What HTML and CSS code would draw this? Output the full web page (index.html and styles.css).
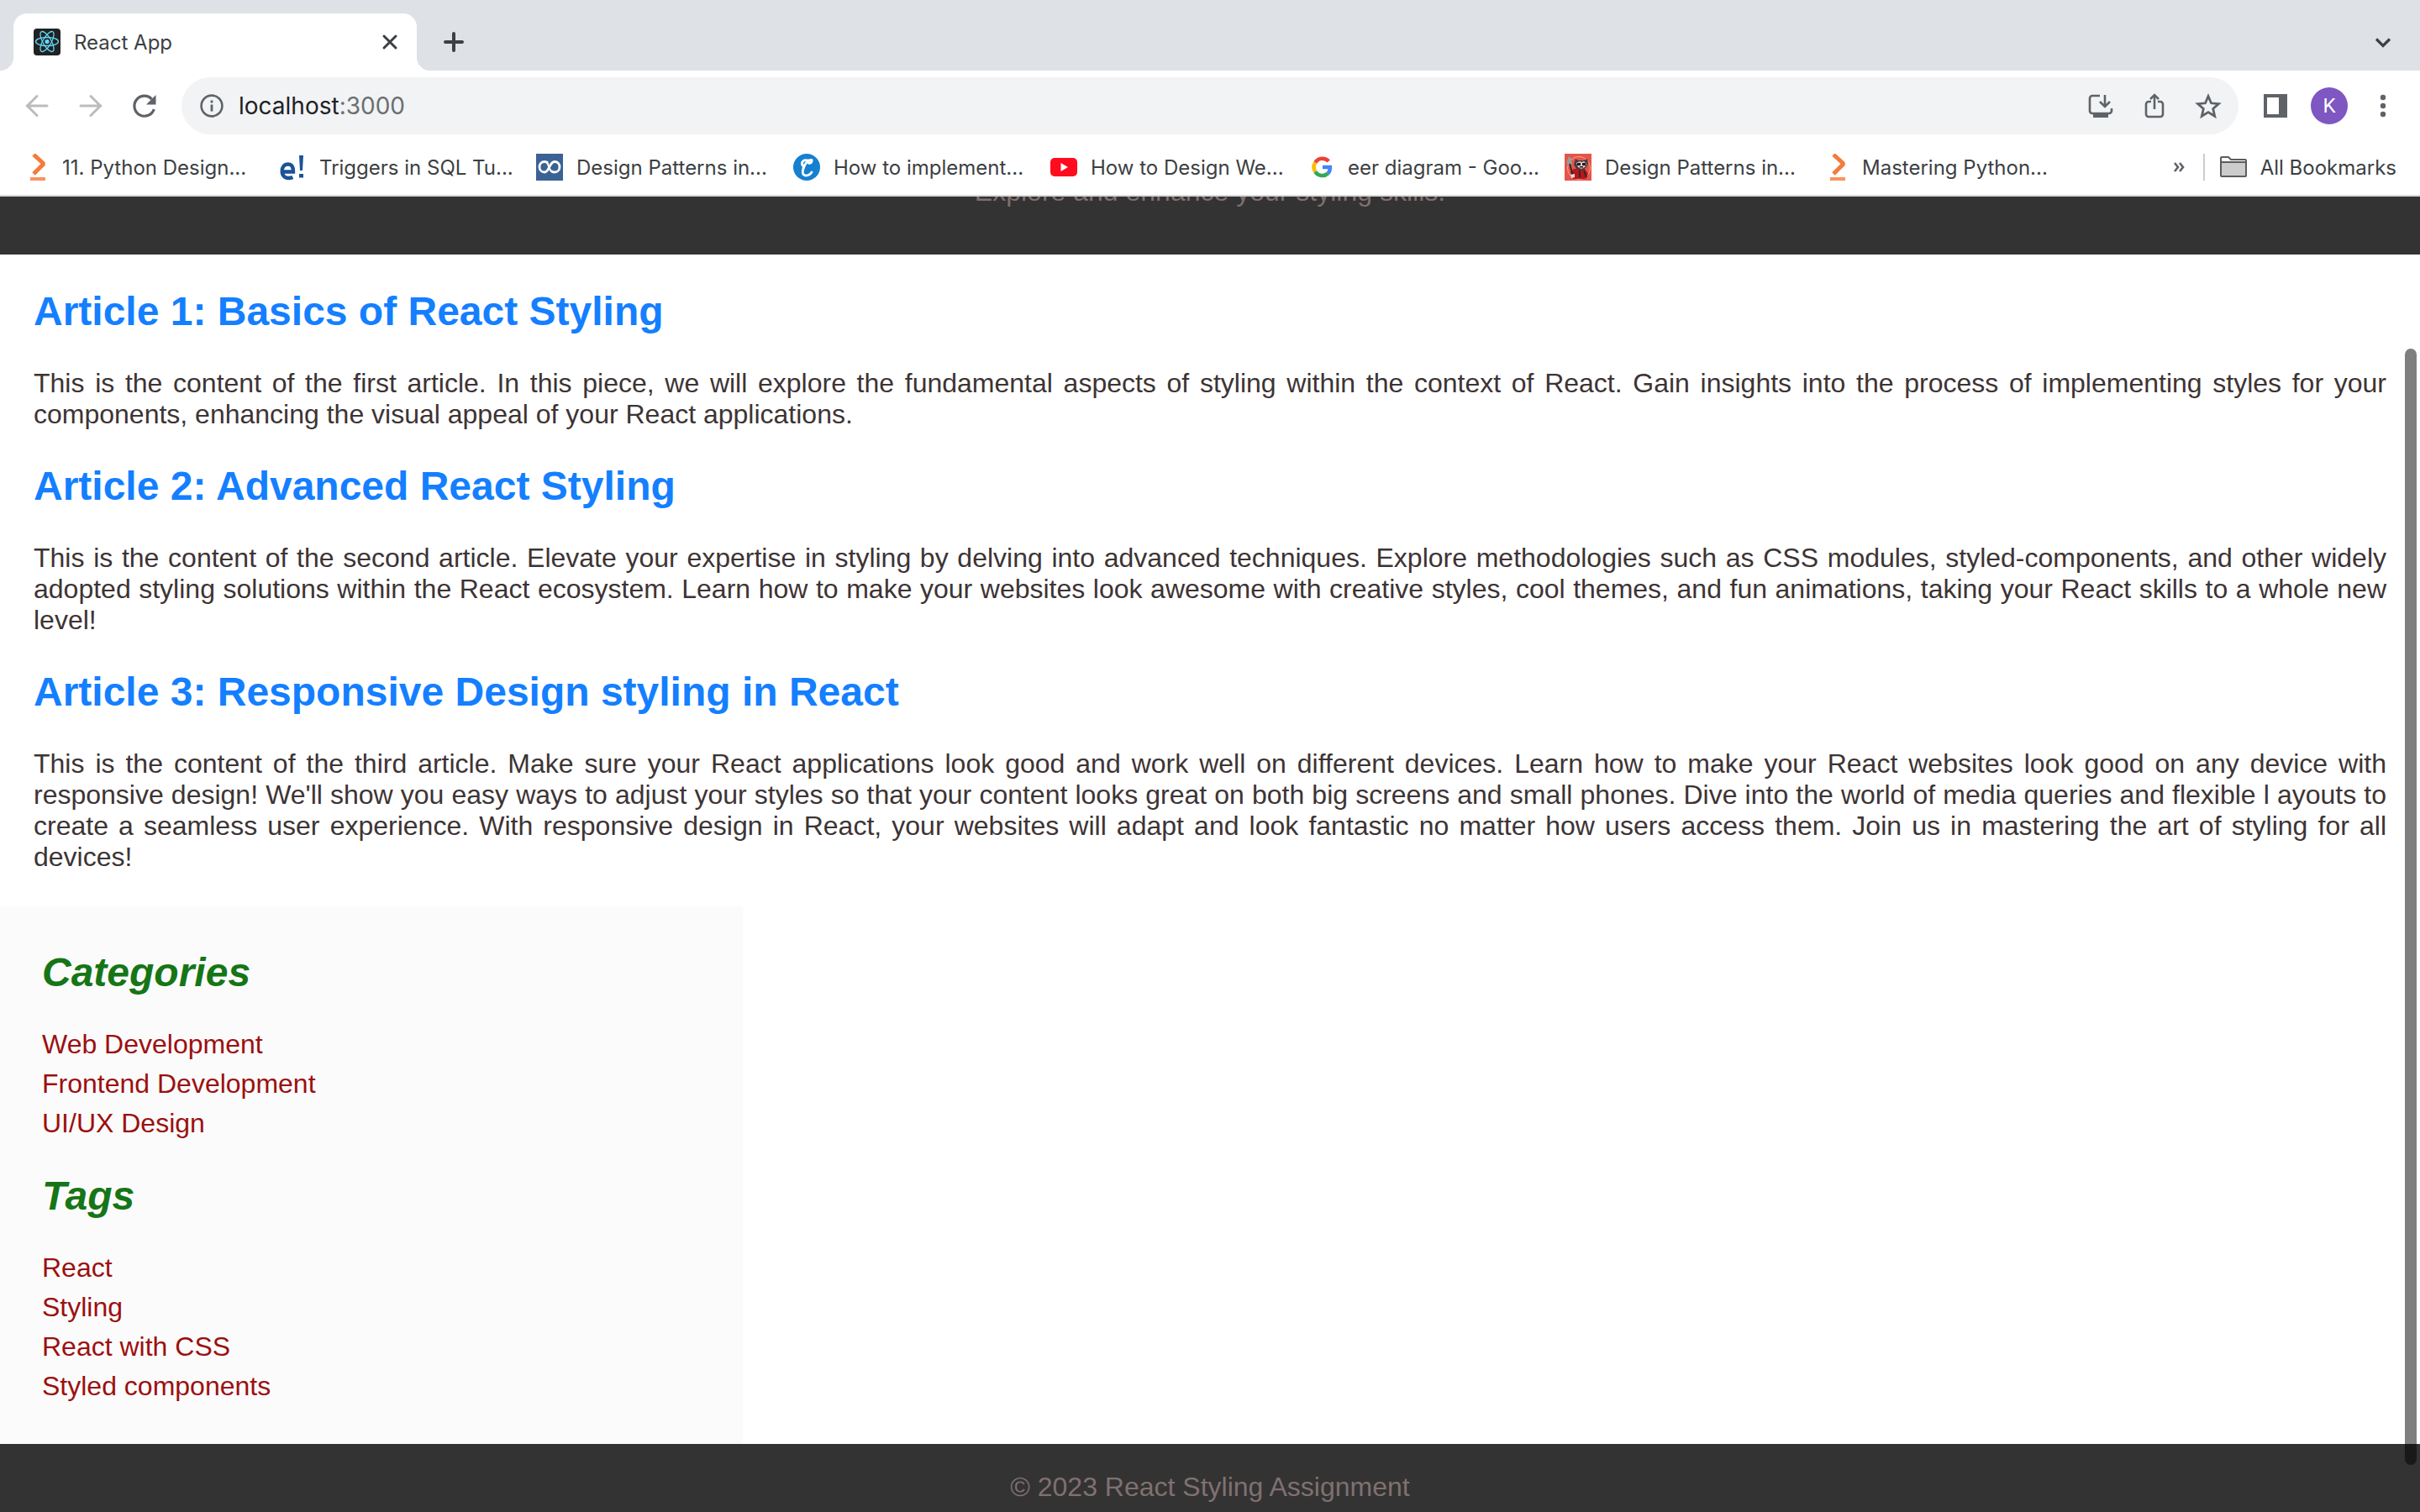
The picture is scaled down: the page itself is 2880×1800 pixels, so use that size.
FILE: index.html
```html
<!DOCTYPE html>
<html lang="en">
<head>
<meta charset="utf-8">
<title>React App</title>
<link rel="stylesheet" href="styles.css">
</head>
<body>
<div class="browser">
  <div class="tabstrip">
    <div class="tab">
      <svg class="tab-icon" viewBox="0 0 32 32"><rect width="32" height="32" rx="4" fill="#222"/><g fill="none" stroke="#61dafb" stroke-width="1.3"><ellipse cx="16" cy="15.500" rx="13.500" ry="5"/><ellipse cx="16" cy="15.500" rx="13.500" ry="5" transform="rotate(60 16 15.500)"/><ellipse cx="16" cy="15.500" rx="13.500" ry="5" transform="rotate(120 16 15.500)"/></g><circle cx="16" cy="15.500" r="2.600" fill="#61dafb"/></svg>
      <span class="tab-title">React App</span>
      <button class="icon-btn small" aria-label="Close tab"><svg viewBox="0 0 20 20"><path d="M3 3l14 14M17 3L3 17" stroke="#3c4043" stroke-width="3" stroke-linecap="round"/></svg></button>
    </div>
    <button class="icon-btn new-tab" aria-label="New tab"><svg viewBox="0 0 28 28"><path d="M14 4v20M4 14h20" stroke="#3c4043" stroke-width="4" stroke-linecap="round"/></svg></button>
    <button class="icon-btn tab-search" aria-label="Search tabs"><svg viewBox="0 0 28 28"><path d="M6 10.500l8 8 8-8" fill="none" stroke="#3c4043" stroke-width="3.200"/></svg></button>
  </div>
  <div class="toolbar">
    <div class="nav">
      <button class="icon-btn" aria-label="Back"><svg viewBox="0 0 32 32"><path d="M28 16H4M16 4.500L4.500 16 16 27.500" fill="none" stroke="#babcbe" stroke-width="3" stroke-linecap="round"/></svg></button>
      <button class="icon-btn" aria-label="Forward"><svg viewBox="0 0 32 32"><path d="M4 16h24M16 4.500L27.500 16 16 27.500" fill="none" stroke="#babcbe" stroke-width="3" stroke-linecap="round"/></svg></button>
      <button class="icon-btn" aria-label="Reload"><svg viewBox="0 0 32 32"><path d="M27.300 20A12 12 0 1 1 24.500 7.800" fill="none" stroke="#5f6368" stroke-width="3.200"/><path d="M29.500 3v11.500H18z" fill="#5f6368"/></svg></button>
    </div>
    <div class="omnibox">
      <svg class="info" viewBox="0 0 28 28"><circle cx="14" cy="14" r="12.400" fill="none" stroke="#5f6368" stroke-width="2.600"/><path d="M14 12.500v8M14 7.500v3" stroke="#5f6368" stroke-width="2.800"/></svg>
      <span class="url">localhost<span class="port">:3000</span></span>
      <div class="actions">
        <button class="icon-btn" aria-label="Install app"><svg viewBox="0 0 32 32"><path d="M15 4H6a3 3 0 0 0-3 3v15a3 3 0 0 0 3 3h20a3 3 0 0 0 3-3v-3M21 3v13M15 11l6 6 6-6" fill="none" stroke="#5f6368" stroke-width="2.600"/><path d="M7 25h18v5H7z" fill="#5f6368"/></svg></button>
        <button class="icon-btn" aria-label="Share"><svg viewBox="0 0 32 32"><path d="M12 11H9a3 3 0 0 0-3 3v12a3 3 0 0 0 3 3h14a3 3 0 0 0 3-3V14a3 3 0 0 0-3-3h-3M16 20V3M11 8l5-5 5 5" fill="none" stroke="#5f6368" stroke-width="2.600"/></svg></button>
        <button class="icon-btn" aria-label="Bookmark"><svg viewBox="0 0 32 32"><path d="M16 4.500l3.500 8.300 8.900.8-6.700 5.900 2 8.800-7.700-4.700-7.700 4.700 2-8.800-6.700-5.900 8.900-.8z" fill="none" stroke="#5f6368" stroke-width="2.800"/></svg></button>
      </div>
    </div>
    <div class="profile">
      <button class="icon-btn panel-btn" aria-label="Side panel"><svg viewBox="0 0 28 28"><path fill-rule="evenodd" d="M0 0h28v28H0zM4 4v20h14V4z" fill="#5f6368"/></svg></button>
      <button class="avatar">K</button>
      <button class="icon-btn" aria-label="Menu"><svg viewBox="0 0 32 32" fill="#5f6368"><circle cx="14" cy="6" r="3.200"/><circle cx="14" cy="16" r="3.200"/><circle cx="14" cy="26" r="3.200"/></svg></button>
    </div>
  </div>
  <nav class="bookmarks" aria-label="Bookmarks">
    <a class="bookmark" href="#"><svg viewBox="0 0 32 32"><path d="M14 1l12 11-12 12" fill="none" stroke="#f47b3c" stroke-width="5" stroke-linejoin="bevel"/><path d="M10 30h18" stroke="#f8935e" stroke-width="4"/></svg>11. Python Design...</a>
    <a class="bookmark" href="#"><svg viewBox="0 0 32 32"><path d="M3 21.500h14c0-7-2.500-9-6-9-5 0-7.300 3.500-7.300 8 0 5.500 3 8.500 8 8.500 2 0 3.300-.400 4.700-1" fill="none" stroke="#1b5397" stroke-width="4.400"/><path d="M24 2h5l-1 18h-3zM24 24h5v4.500h-5z" fill="#1b5397"/></svg>Triggers in SQL Tu...</a>
    <a class="bookmark" href="#"><svg viewBox="0 0 32 32"><path fill="#3a6295" d="M0 0h32v32H0z"/><path d="M14 11c-1-1-2-1.500-4-1.500-3.500 0-6 2.700-6 6.200s2.500 6.300 6 6.300c6 0 5.500-12.500 12-12.500 3.500 0 6 2.700 6 6.200s-2.500 6.300-6 6.300c-2 0-3-.500-4-1.500" fill="none" stroke="#fff" stroke-width="2.800"/><path d="M12.500 10c3 2 2.500 11 7 11.500" fill="none" stroke="#fff" stroke-width="2.200"/></svg>Design Patterns in...</a>
    <a class="bookmark" href="#"><svg viewBox="0 0 32 32"><circle cx="16" cy="16" r="16" fill="#1680d0"/><path d="M11 14c-2-5 2-7 6-6 4 0 6-2 5 1s-5 3-4 0M17 9c-5 5-9 17-2 17 3 0 5-1 7-4" fill="none" stroke="#fff" stroke-width="2.800" stroke-linecap="round"/></svg>How to implement...</a>
    <a class="bookmark" href="#"><svg viewBox="0 0 32 32"><rect y="5" width="32" height="22" rx="5" fill="#ff0b1e"/><path d="M12.500 11v10l8.500-5z" fill="#fff"/></svg>How to Design We...</a>
    <a class="bookmark" href="#"><svg viewBox="0 0 32 32" fill="none" stroke-width="4.600"><path d="M25.200 9A10 10 0 0 0 9.300 10.500" stroke="#ea4335"/><path d="M9.300 10.500a10 10 0 0 0 0 11" stroke="#fbbc05"/><path d="M9.300 21.500a10 10 0 0 0 15 2" stroke="#34a853"/><path d="M24.300 23.500c2-2 2.700-4.500 2.500-7.500H18" stroke="#4285f4"/></svg>eer diagram - Goo...</a>
    <a class="bookmark" href="#"><svg viewBox="0 0 32 32"><path fill="#e45549" d="M0 0h32v32H0z"/><circle cx="17" cy="17" r="13.500" fill="none" stroke="#f3a48f"/><path d="M11 18h13l4 6-3 6H10l-3-8z" fill="#b5171c"/><path d="M13 6l3 2h7l4-2 1 6-3 5-5 3-6-2-3-5z" fill="#4a3b3d"/><path d="M14 11l4-2 2 1 3-1 3 3-2 4-4 2-4-2z" fill="#d8cbc5"/><path d="M15 11h4v3h-4zM21 11h4v3h-4zM18 15h4v1.500h-4z" fill="#241b1e"/><path d="M5 3l3 3 1 6-3 2-4-3z" fill="#9a9a9e"/><path d="M6 12l4 14M18 20v8M23 20l3 8" stroke="#33282b" stroke-width="2"/><path d="M7 25l5-1v4l-4 1z" fill="#ddd"/></svg>Design Patterns in...</a>
    <a class="bookmark" href="#"><svg viewBox="0 0 32 32"><path d="M14 1l12 11-12 12" fill="none" stroke="#f47b3c" stroke-width="5" stroke-linejoin="bevel"/><path d="M10 30h18" stroke="#f8935e" stroke-width="4"/></svg>Mastering Python...</a>
    <button class="icon-btn overflow" aria-label="More bookmarks"><svg viewBox="0 0 14 14"><path d="M2 2l4 5-4 5M8 2l4 5-4 5" fill="none" stroke="#5f6368" stroke-width="2.600"/></svg></button>
    <a class="all-bookmarks" href="#"><svg viewBox="0 0 32 32"><path d="M1 6V5a2 2 0 0 1 2-2h7l3 3h16a2 2 0 0 1 2 2v17a2 2 0 0 1-2 2H3a2 2 0 0 1-2-2z" fill="#fff"/><path d="M1 10h30v16H1z" fill="#ccc"/><path d="M1 25V5a1 1 0 0 1 1-1h8l3 3h17a1 1 0 0 1 1 1v18a1 1 0 0 1-1 1H2a1 1 0 0 1-1-1zM1 10h30" fill="none" stroke="#5c5c5c" stroke-width="2"/></svg>All Bookmarks</a>
  </nav>
  <div class="viewport">
    <header class="site-header"><p>Explore and enhance your styling skills.</p></header>
    <main class="articles">
      <article>
        <h2>Article 1: Basics of React Styling</h2>
        <p>This is the content of the first article. In this piece, we will explore the fundamental aspects of styling within the context of React. Gain insights into the process of implementing styles for your components, enhancing the visual appeal of your React applications.</p>
      </article>
      <article>
        <h2>Article 2: Advanced React Styling</h2>
        <p>This is the content of the second article. Elevate your expertise in styling by delving into advanced techniques. Explore methodologies such as CSS modules, styled-components, and other widely adopted styling solutions within the React ecosystem. Learn how to make your websites look awesome with creative styles, cool themes, and fun animations, taking your React skills to a whole new level!</p>
      </article>
      <article>
        <h2>Article 3: Responsive Design styling in React</h2>
        <p>This is the content of the third article. Make sure your React applications look good and work well on different devices. Learn how to make your React websites look good on any device with responsive design! We'll show you easy ways to adjust your styles so that your content looks great on both big screens and small phones. Dive into the world of media queries and flexible l ayouts to create a seamless user experience. With responsive design in React, your websites will adapt and look fantastic no matter how users access them. Join us in mastering the art of styling for all devices!</p>
      </article>
    </main>
    <aside class="sidebar">
      <h2>Categories</h2>
      <ul><li>Web Development</li><li>Frontend Development</li><li>UI/UX Design</li></ul>
      <h2>Tags</h2>
      <ul><li>React</li><li>Styling</li><li>React with CSS</li><li>Styled components</li></ul>
    </aside>
    <footer class="site-footer"><p>© 2023 React Styling Assignment</p></footer>
    <div class="scroll-thumb"></div>
  </div>
</div>
</body>
</html>
```
FILE: styles.css
```css
* { box-sizing: border-box; }
body { margin: 0; background: #fff; }
svg { display: block; }

.browser {
  height: 100vh;
  display: flex;
  flex-direction: column;
  overflow: hidden;
  font-family: Inter, Roboto, sans-serif;
  font-size: 24px;
  color: #3c4043;
}
.icon-btn {
  flex: none;
  width: 32px;
  height: 32px;
  padding: 0;
  border: 0;
  background: none;
}
.icon-btn.small { width: 20px; height: 20px; }

.tabstrip {
  flex: none;
  height: 84px;
  padding: 16px 30px 0 16px;
  display: flex;
  align-items: center;
  background: #dee1e6;
}
.tab {
  position: relative;
  width: 480px;
  height: 68px;
  padding: 0 22px 0 24px;
  display: flex;
  align-items: center;
  gap: 16px;
  background: #fff;
  border-radius: 16px 16px 0 0;
}
.tab::before, .tab::after {
  content: "";
  position: absolute;
  bottom: 0;
  width: 16px;
  height: 16px;
}
.tab::before { left: -16px; background: radial-gradient(circle at 0 0, #dee1e6 16px, #fff 16px); }
.tab::after { right: -16px; background: radial-gradient(circle at 100% 0, #dee1e6 16px, #fff 16px); }
.tab-icon { width: 32px; height: 32px; }
.tab-title { flex: 1; }
.new-tab { width: 28px; height: 28px; margin-left: 30px; }
.tab-search { width: 28px; height: 28px; margin-left: auto; }

.toolbar {
  flex: none;
  height: 84px;
  padding: 0 26px 0 28px;
  display: flex;
  align-items: center;
}
.nav { width: 188px; display: flex; gap: 32px; }
.omnibox {
  flex: 1;
  height: 68px;
  padding: 0 20px 0 22px;
  display: flex;
  align-items: center;
  gap: 18px;
  background: #f1f3f4;
  border-radius: 34px;
  font-size: 28px;
  color: #202124;
}
.info { width: 28px; height: 28px; }
.port { color: #6b6e72; }
.actions { margin-left: auto; display: flex; gap: 32px; }
.profile { display: flex; align-items: center; gap: 28px; margin-left: 30px; }
.panel-btn { width: 28px; height: 28px; }
.avatar {
  width: 44px;
  height: 44px;
  padding: 0;
  border: 0;
  border-radius: 50%;
  background: #7e57c2;
  color: #fff;
  font: 24px Roboto, sans-serif;
}

.bookmarks {
  flex: none;
  height: 66px;
  padding: 0 28px 2px 26px;
  display: flex;
  align-items: center;
  border-bottom: 2px solid #dadada;
}
.bookmark, .all-bookmarks {
  display: flex;
  align-items: center;
  gap: 16px;
  color: inherit;
  text-decoration: none;
  white-space: nowrap;
}
.bookmark { width: 306px; }
.bookmark svg, .all-bookmarks svg { flex: none; width: 32px; height: 32px; }
.overflow { width: 14px; height: 14px; margin-left: auto; }
.all-bookmarks {
  height: 32px;
  margin-left: 22px;
  padding-left: 18px;
  border-left: 2px solid #ccc;
}

.viewport {
  position: relative;
  flex: 1;
  min-height: 0;
  overflow: hidden;
  display: flex;
  flex-direction: column;
  font: 32px/37px "Liberation Sans", Arial, sans-serif;
  color: #3d3434;
}
.viewport p { margin: 0; }
.viewport h2 { margin: 0; font-size: 48px; line-height: 55px; }
.site-header {
  flex: none;
  height: 69px;
  padding-bottom: 56px;
  display: flex;
  flex-direction: column;
  justify-content: flex-end;
  overflow: hidden;
  background: #333;
  color: #807070;
  text-align: center;
}
.articles {
  padding: 40px;
  display: flex;
  flex-direction: column;
  gap: 39px;
  text-align: justify;
}
.articles article { display: flex; flex-direction: column; gap: 40px; }
.articles h2 { color: #147fff; }
.sidebar {
  width: calc(30% + 20px);
  padding: 51px 50px 50px;
  display: flex;
  flex-direction: column;
  gap: 40px;
  background: #fbfbfb;
}
.sidebar h2 { color: #167516; font-style: italic; }
.sidebar ul {
  margin: 0;
  padding: 0;
  display: flex;
  flex-direction: column;
  gap: 10px;
  list-style: none;
  color: #9b1010;
}
.site-footer {
  flex: 1 0 auto;
  padding-top: 33px;
  background: #333;
  color: #807070;
  text-align: center;
}
.scroll-thumb {
  position: absolute;
  top: 181px;
  right: 4px;
  bottom: 56px;
  width: 14px;
  border-radius: 7px;
  background: rgba(0, 0, 0, 0.5);
}
```
